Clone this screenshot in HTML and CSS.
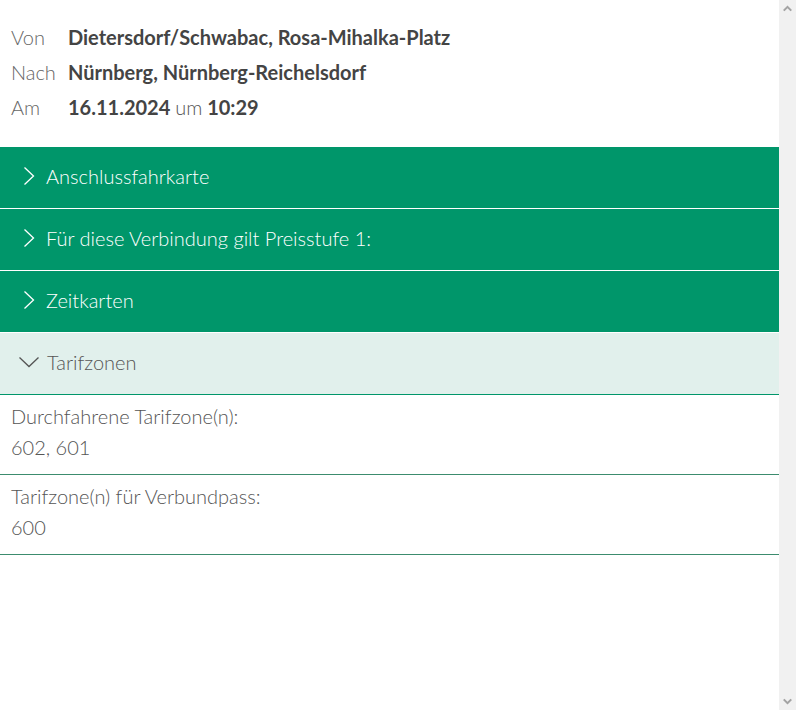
FILE: index.html
```html
<!DOCTYPE html>
<html lang="de">
<head>
    <meta charset="UTF-8">
    <meta name="viewport" content="width=device-width, initial-scale=1.0">
    <title>Tarifauskunft</title>
    <link rel="stylesheet" href="styles.css">
</head>
<body>

    <div class="page">
        <div class="trip">
            <div class="trip-row">
                <span class="label">Von</span>
                <span class="value">Dietersdorf/Schwabac, Rosa-Mihalka-Platz</span>
            </div>
            <div class="trip-row">
                <span class="label">Nach</span>
                <span class="value">Nürnberg, Nürnberg-Reichelsdorf</span>
            </div>
            <div class="trip-row">
                <span class="label">Am</span>
                <span class="value">16.11.2024 <span class="thin">um</span> 10:29</span>
            </div>
        </div>

        <!-- Aufklappbare Abschnitte -->
        <div class="section">
            <div class="section-head">
                <svg class="chev" width="12" height="20" viewBox="0 0 12 20"><path d="M1.5 1.5 L10.5 10 L1.5 18.5" fill="none" stroke="currentColor" stroke-width="1.3"/></svg>
                Anschlussfahrkarte
            </div>
        </div>
        <div class="section">
            <div class="section-head">
                <svg class="chev" width="12" height="20" viewBox="0 0 12 20"><path d="M1.5 1.5 L10.5 10 L1.5 18.5" fill="none" stroke="currentColor" stroke-width="1.3"/></svg>
                Für diese Verbindung gilt Preisstufe 1:
            </div>
        </div>
        <div class="section">
            <div class="section-head">
                <svg class="chev" width="12" height="20" viewBox="0 0 12 20"><path d="M1.5 1.5 L10.5 10 L1.5 18.5" fill="none" stroke="currentColor" stroke-width="1.3"/></svg>
                Zeitkarten
            </div>
        </div>
        <div class="section open">
            <div class="section-head">
                <svg class="chev" width="22" height="12" viewBox="0 0 22 12"><path d="M1.5 1.5 L11 10.5 L20.5 1.5" fill="none" stroke="currentColor" stroke-width="1.3"/></svg>
                Tarifzonen
            </div>
            <div class="section-body">
                <div class="zone">
                    <div>Durchfahrene Tarifzone(n):</div>
                    <div>602, 601</div>
                </div>
                <div class="zone">
                    <div>Tarifzone(n) für Verbundpass:</div>
                    <div>600</div>
                </div>
            </div>
        </div>
    </div>

    <!-- Scrollleiste -->
    <div class="scrollbar">
        <svg width="17" height="17" viewBox="0 0 17 17"><path d="M4 10 L8.5 5.5 L13 10 L11.5 11.2 L8.5 8.2 L5.5 11.2 Z" fill="#a3a3a3"/></svg>
        <svg width="17" height="17" viewBox="0 0 17 17"><path d="M4 7 L8.5 11.5 L13 7 L11.5 5.8 L8.5 8.8 L5.5 5.8 Z" fill="#a3a3a3"/></svg>
    </div>

</body>
</html>
```

FILE: styles.css
```css
html {
    overflow: hidden;
}

body {
    font-family: Lato, "Open Sans", sans-serif;
    color: #444;
    margin: 0;
    padding: 0;
    background-color: white;
    display: flex;
    height: 710px;
}

.page {
    flex: 1;
}

.scrollbar {
    width: 17px;
    background-color: #f1f1f1;
    display: flex;
    flex-direction: column;
    justify-content: space-between;
}

.scrollbar svg {
    display: block;
}

.trip {
    padding: 19px 11px 23px;
}

.trip-row {
    display: flex;
    height: 35px;
    align-items: center;
    font-size: 20px;
}

.label {
    width: 57px;
    color: #666;
    font-weight: 300;
}

.value {
    color: #444;
    font-weight: 700;
}

.thin {
    font-weight: 300;
    color: #555;
}

.section-head {
    display: flex;
    align-items: center;
    height: 58px;
    padding-bottom: 3px;
    padding-left: 23px;
    gap: 11px;
    background-color: #00966a;
    color: white;
    font-size: 20px;
    font-weight: 300;
    border-bottom: 1px solid white;
}

.chev {
    flex-shrink: 0;
}

.open .section-head {
    background-color: #e1f0ec;
    color: #555;
    border-bottom: 1px solid #00966a;
    padding-left: 18px;
    gap: 7px;
}

.zone {
    padding: 6px 11px 11px;
    border-bottom: 1px solid #3c8c6e;
    font-size: 20px;
    font-weight: 300;
    color: #555;
    line-height: 31px;
}
```
